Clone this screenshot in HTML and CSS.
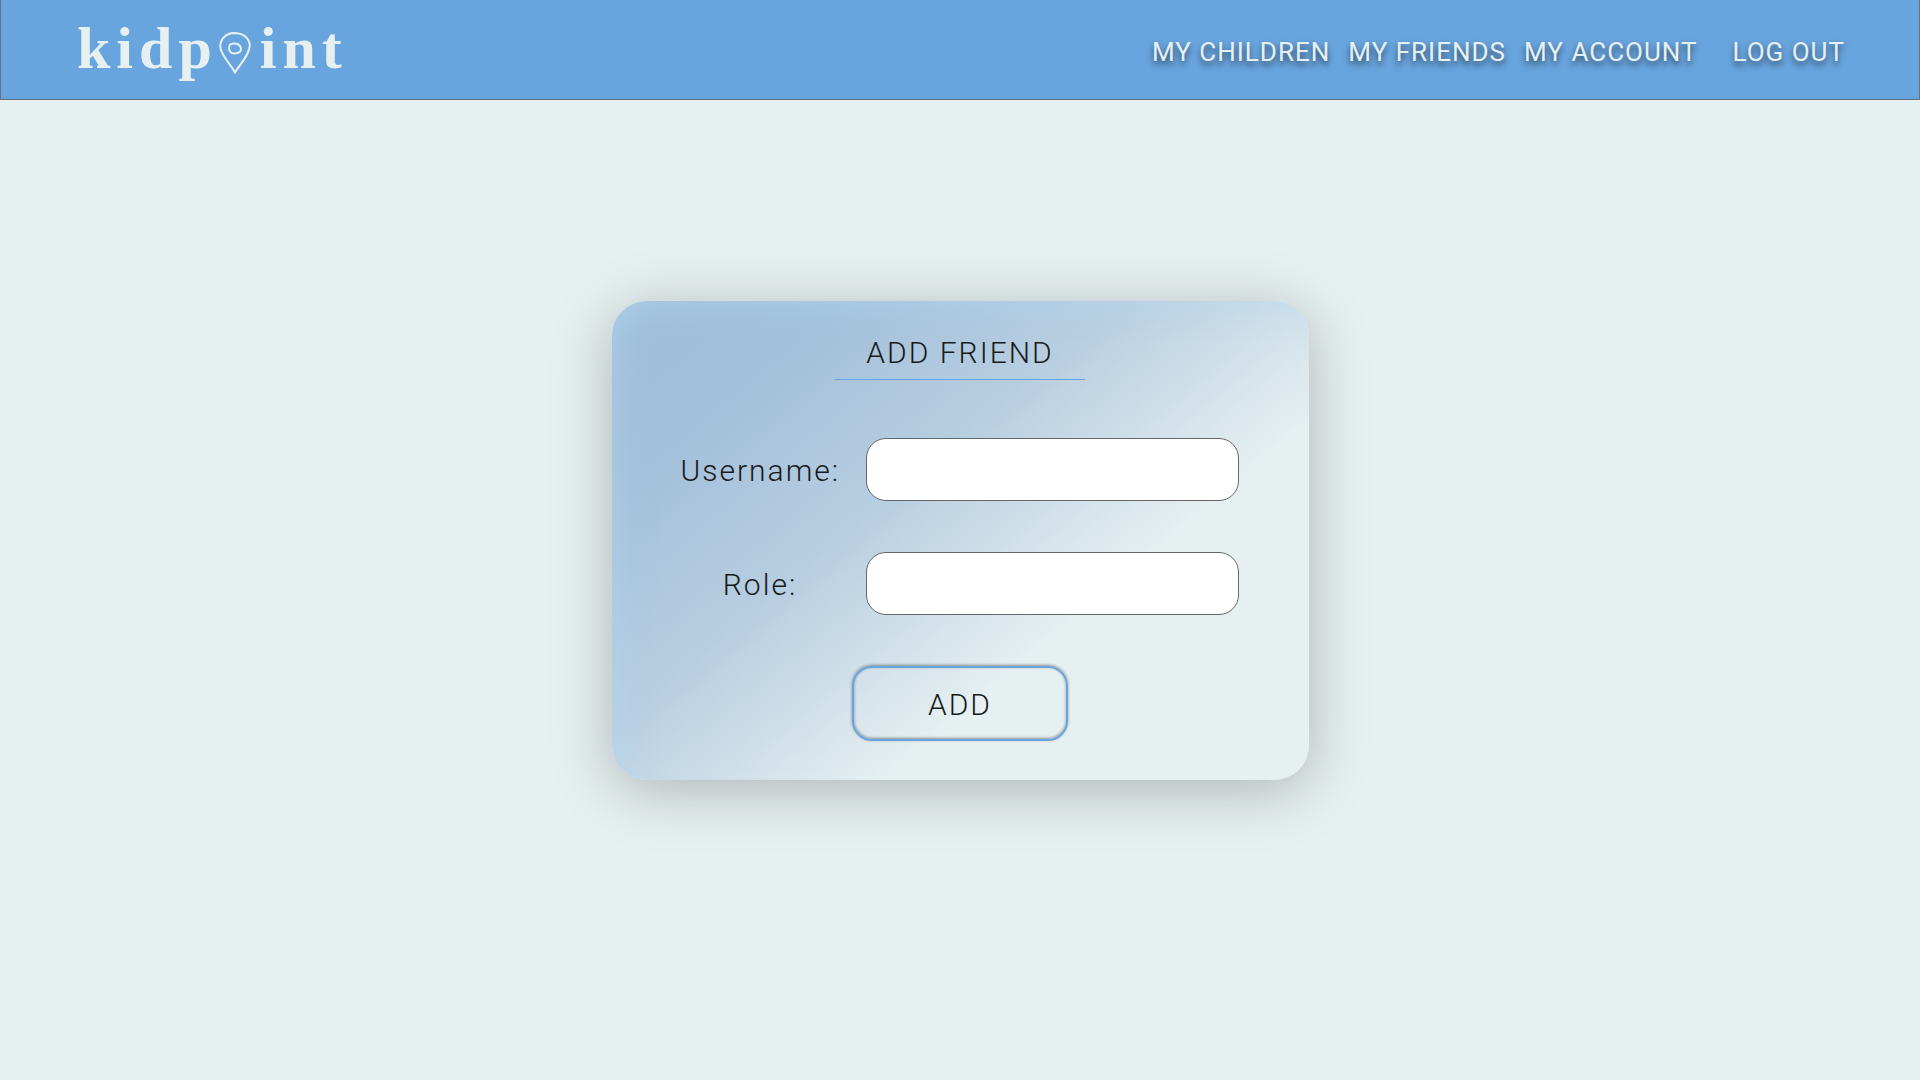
FILE: index.html
```html
<!DOCTYPE html>
<html lang="en">
<head>
<meta charset="utf-8">
<meta name="viewport" content="width=device-width, initial-scale=1">
<title>kidpoint – Add friend</title>
<link rel="stylesheet" href="styles.css">
</head>
<body>
<header class="site-header">
  <a class="logo" href="#" aria-label="kidpoint">
    <span>kidp</span>
    <svg class="logo-pin" viewBox="0 0 32 42" aria-hidden="true">
      <path d="M16 40.500C12 32.500 1.500 23 1.200 14.500C1.500 6.500 7.500 1.200 15 1C24 1 30.500 6 30.800 13.500C30.500 22.500 22 31 16 40.500Z"/>
      <path d="M10.500 13C12 11.500 16 10.800 18.500 12C22.500 14 23 18 20.500 20.200C17.500 22 12.500 21.800 11 19.500C9.800 17.500 10 14.500 11.200 12.500"/>
    </svg>
    <span>int</span>
  </a>
  <nav class="nav">
    <a href="#">MY CHILDREN</a>
    <a href="#">MY FRIENDS</a>
    <a href="#">MY ACCOUNT</a>
    <a class="logout" href="#">LOG OUT</a>
  </nav>
</header>
<main class="page">
  <form class="card">
    <h1 class="title">ADD FRIEND</h1>
    <div class="field">
      <label for="username">Username:</label>
      <input id="username" type="text">
    </div>
    <div class="field">
      <label for="role">Role:</label>
      <input id="role" type="text">
    </div>
    <button class="add" type="button">ADD</button>
  </form>
</main>
</body>
</html>
```
FILE: styles.css
```css
* {
  box-sizing: border-box;
}

body {
  margin: 0;
  min-height: 100vh;
  display: flex;
  flex-direction: column;
  background: #e7f0f1;
  color: #171b20;
  font-family: Roboto, sans-serif;
}

.site-header {
  display: flex;
  align-items: center;
  justify-content: space-between;
  height: 100px;
  padding: 0 74px 0 76px;
  border: 1px solid #666f7a;
  border-top: 0;
  background: #68a4de;
}

.logo {
  display: flex;
  align-items: center;
  gap: 1px;
  padding-bottom: 3px;
  color: #e7f0f1;
  font: bold 60px/60px "Liberation Serif", serif;
  letter-spacing: 6px;
  text-decoration: none;
}

.logo-pin {
  width: 32px;
  height: 42px;
  margin: 10px 8px 0 0;
  fill: none;
  stroke: currentColor;
  stroke-width: 2;
}

.nav {
  display: flex;
  gap: 18px;
  padding-top: 5px;
}

.nav a {
  color: #e7f0f1;
  font-size: 26px;
  line-height: 30px;
  letter-spacing: 1px;
  text-decoration: none;
  text-shadow: 0 4px 6px rgba(0, 0, 0, 0.6);
}

.nav .logout {
  margin-left: 17px;
}

.page {
  flex: 1;
  display: flex;
  justify-content: center;
  align-items: flex-start;
  padding: 201px 20px 60px;
}

.card {
  display: flex;
  flex-direction: column;
  align-items: center;
  width: 100%;
  max-width: 697px;
  padding: 31px 69px 39px;
  border-radius: 35px;
  background: linear-gradient(140deg, #9fbcd8 0%, #a3c0da 18%, #b7cee1 40%, #e7f0f1 67%);
  box-shadow: 0 10px 60px rgba(0, 0, 0, 0.25), inset 18px 18px 40px -18px rgba(180, 218, 245, 0.6);
}

.title {
  width: 250px;
  margin: 0 0 58px;
  padding-bottom: 5px;
  border-bottom: 1px solid #68a4de;
  font-size: 30px;
  font-weight: 350;
  line-height: 42px;
  letter-spacing: 2px;
  text-align: center;
}

.field {
  display: grid;
  grid-template-columns: 159px 1fr;
  column-gap: 26px;
  align-items: center;
  width: 100%;
  padding-right: 1px;
  margin-bottom: 51px;
}

.field label {
  padding-top: 2px;
  font-size: 30px;
  font-weight: 350;
  letter-spacing: 2px;
  text-align: center;
}

.field input {
  width: 100%;
  height: 63px;
  padding: 0 20px;
  border: 1px solid #666;
  border-radius: 20px;
  background: #fff;
  font: 26px Roboto, sans-serif;
}

.add {
  width: 216px;
  height: 75px;
  padding: 2px 0 0;
  border: 2px solid #68a4de;
  border-radius: 20px;
  background: transparent;
  box-shadow: 0 -1px 3px rgba(0, 0, 0, 0.4), inset 0 -1px 3px rgba(0, 0, 0, 0.4);
  color: inherit;
  font: 350 30px Roboto, sans-serif;
  letter-spacing: 2px;
}
```
